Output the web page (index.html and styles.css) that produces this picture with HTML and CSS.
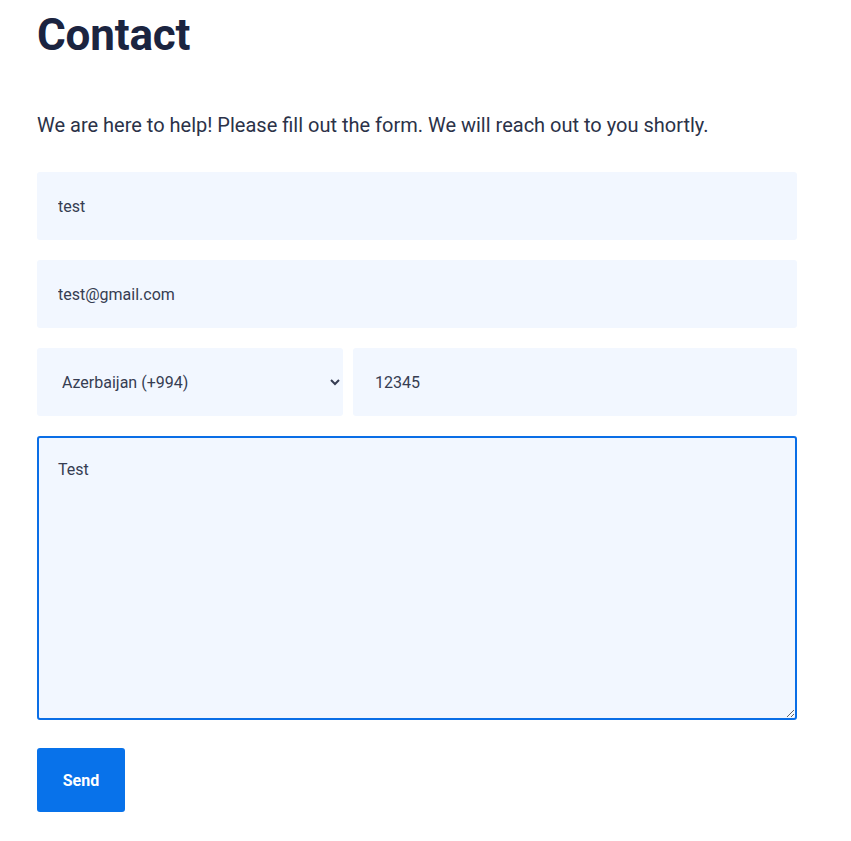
FILE: index.html
```html
<!DOCTYPE html>
<html lang="en">
<head>
<meta charset="utf-8">
<title>Contact</title>
<link rel="stylesheet" href="styles.css">
</head>
<body>
<main class="page">
  <h1 class="title">Contact</h1>
  <p class="lead">We are here to help! Please fill out the form. We will reach out to you shortly.</p>
  <form class="form">
    <input class="field" type="text" value="test">
    <input class="field" type="email" value="test@gmail.com">
    <div class="row">
      <select class="field select">
        <option>Azerbaijan (+994)</option>
      </select>
      <input class="field phone" type="tel" value="12345">
    </div>
    <textarea class="field message">Test</textarea>
    <div class="actions">
      <button class="send" type="button">Send</button>
    </div>
  </form>
</main>
</body>
</html>
```
FILE: styles.css
```css
html, body {
  margin: 0;
  padding: 0;
  background: #ffffff;
}
body {
  font-family: Roboto, "Liberation Sans", Arial, sans-serif;
  color: #2b3248;
}
.page {
  width: 760px;
  padding: 0 0 0 37px;
}
.title {
  margin: 0;
  padding-top: 9px;
  font-size: 44px;
  line-height: 52px;
  font-weight: 700;
  color: #1b2440;
  letter-spacing: -0.2px;
}
.lead {
  margin: 50px 0 0 0;
  font-size: 20px;
  line-height: 28px;
  color: #2b3248;
}
.form {
  margin-top: 33px;
  display: flex;
  flex-direction: column;
  gap: 20px;
}
.field {
  box-sizing: border-box;
  display: block;
  width: 100%;
  height: 68px;
  margin: 0;
  padding: 0 21px;
  border: none;
  border-radius: 3px;
  background-color: #f2f7ff;
  font-family: Roboto, "Liberation Sans", Arial, sans-serif;
  font-size: 16px;
  color: #363d52;
  outline: none;
}
.row {
  display: flex;
  gap: 10px;
}
.select {
  width: 306px;
  flex: 0 0 306px;
  padding: 0 10px 0 21px;
}
.phone {
  flex: 1 1 auto;
  width: auto;
  padding-left: 22px;
}
.message {
  height: 284px;
  border: 2px solid #0a6ee6;
  padding: 22px 19px 20px;
  resize: vertical;
  line-height: 19px;
}
.actions {
  padding-top: 8px;
}
.send {
  width: 88px;
  height: 64px;
  border: none;
  border-radius: 3px;
  background: #0872ea;
  color: #ffffff;
  font-family: Roboto, "Liberation Sans", Arial, sans-serif;
  font-weight: 700;
  font-size: 16px;
  cursor: pointer;
}
```
